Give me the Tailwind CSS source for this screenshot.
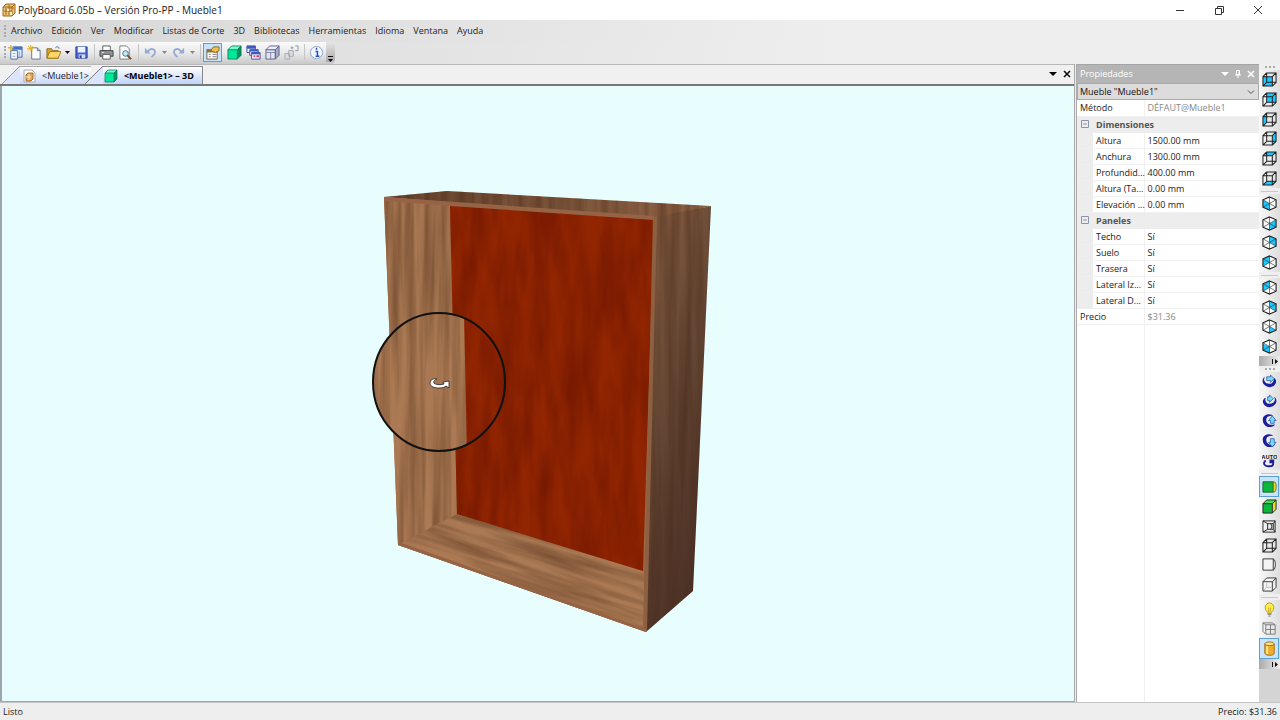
<!DOCTYPE html>
<html lang="es">
<head>
    <meta charset="UTF-8">
    <meta name="viewport" content="width=device-width, initial-scale=1.0">
    <title>PolyBoard 6.05b – Versión Pro-PP - Mueble1</title>
    <script src="https://cdn.jsdelivr.net/npm/@tailwindcss/browser@4"></script>
</head>
<body class="h-screen flex flex-col overflow-hidden bg-[#eeeeee] font-['Open_Sans','Noto_Sans',sans-serif] text-[9px] leading-4 text-[#222]">
    <!-- Title bar -->
    <header class="h-5 shrink-0 flex items-center bg-white pl-0.5 pr-[3px]">
        <svg class="size-3.5" viewBox="0 0 14 14"><path d="M1 4 4 1h9v9l-3 3H1z" fill="#f0c37a" stroke="#9a6418"/><path d="M1 4h9v9M10 4l3-3M4 5v7M7 2v10M2 8h8M7 5h5" fill="none" stroke="#a56d20"/><path d="M5 6h2v2H5zM8 9h2v3H8z" fill="#fff0c4"/></svg>
        <h1 class="ml-0.5 text-[10px]">PolyBoard 6.05b – Versión Pro-PP - Mueble1</h1>
        <div class="ml-auto flex">
            <button aria-label="Minimizar" class="w-[39px] h-5 flex items-center justify-center"><svg class="size-3" viewBox="0 0 12 12"><path d="M2 6.500h8" stroke="#333"/></svg></button>
            <button aria-label="Restaurar" class="w-[39px] h-5 flex items-center justify-center"><svg class="size-3" viewBox="0 0 12 12" fill="none" stroke="#333"><path d="M2.500 4.500h6v6h-6zM4.500 4.500v-2h6v6h-2"/></svg></button>
            <button aria-label="Cerrar" class="w-[39px] h-5 flex items-center justify-center"><svg class="size-3" viewBox="0 0 12 12"><path d="m2 2 8 8m0-8-8 8" stroke="#333"/></svg></button>
        </div>
    </header>

    <!-- Menu and toolbar -->
    <nav class="h-[22px] shrink-0 flex items-center gap-[9px] pl-1 bg-linear-to-r from-[#d6d6d6] to-[#eeeeee] to-65%">
        <span class="h-3 -mr-1 border-l-2 border-dotted border-[#aaa]"></span>
        <button>Archivo</button>
        <button>Edición</button>
        <button>Ver</button>
        <button>Modificar</button>
        <button>Listas de Corte</button>
        <button>3D</button>
        <button>Bibliotecas</button>
        <button>Herramientas</button>
        <button>Idioma</button>
        <button>Ventana</button>
        <button>Ayuda</button>
    </nav>
    <div class="h-[22px] shrink-0 flex bg-linear-to-r from-[#d8d8d8] to-[#eeeeee] to-65%">
        <div id="toolbar" class="flex items-center pl-1 pb-0.5 rounded-r bg-linear-to-b from-[#fafafa] via-[#e9e9e9] to-[#c9c9c9]"></div>
    </div>

    <div class="flex-1 min-h-0 flex">
        <!-- Document area -->
        <main class="flex-1 min-w-0 flex flex-col border-r border-[#a9a9a9]">
            <div class="h-[22px] shrink-0 flex items-end border-t border-[#b8b8b8] border-b-2 border-b-[#777] bg-[#f0f0f0]">
                <button class="h-[18px] flex items-center pl-0.5">
                    <svg class="w-[18px] h-[18px]" viewBox="0 0 18 18"><path d="M0 18 18 0v18z" fill="#dce5fa"/><path d="M0 18 18 0" stroke="#999"/></svg>
                    <span class="h-[18px] flex items-center gap-1.5 border-t border-[#aaa] bg-linear-to-b from-white to-[#cad8f8] pl-0.5 pr-0.5">
                        <svg class="size-3.5" viewBox="0 0 14 14"><path d="M2 1h8l3 3v9H2z" fill="#fff" stroke="#aaa"/><path d="m4 6 2-2h5v6l-2 2H4z" fill="#e2a254" stroke="#a86f2b"/><path d="M4 8h5M7 5v6" stroke="#fff0c8"/></svg>
                        &lt;Mueble1&gt;
                    </span>
                </button>
                <button class="h-[18px] -ml-1.5 flex items-center font-bold text-black">
                    <svg class="w-[18px] h-[18px]" viewBox="0 0 18 18"><path d="M0 18 18 0v18z" fill="#d9e4fd"/><path d="M0 18 18 0" stroke="#777"/></svg>
                    <span class="h-[18px] flex items-center gap-1.5 border-t border-r border-[#888] bg-linear-to-b from-white to-[#bfd2fb] pl-px pr-2">
                        <svg class="size-3.5" viewBox="0 0 14 14"><path d="M1 4h9v9H1z" fill="#00e89a"/><path d="m1 4 3-3h9l-3 3z" fill="#6dffd0"/><path d="m10 4 3-3v9l-3 3z" fill="#009a68"/><path d="M1 4h9v9H1zl3-3h9l-3 3m3-3v9l-3 3" fill="none" stroke="#08704e" stroke-width=".7"/></svg>
                        &lt;Mueble1&gt; – 3D
                    </span>
                </button>
                <div class="ml-auto h-5 flex items-center gap-1 pr-0.5">
                    <button aria-label="Lista de ventanas"><svg class="w-2.5 h-2" viewBox="0 0 10 8"><path d="M1 2h8L5 6z"/></svg></button>
                    <button aria-label="Cerrar vista"><svg class="size-2.5" viewBox="0 0 10 10"><path d="m2 2 6 6m0-6-6 6" stroke="#111" stroke-width="1.6"/></svg></button>
                </div>
            </div>
            <div class="flex-1 min-h-0 border-l-2 border-b border-[#9da6ac] bg-[#e7fdfe]">
                <svg class="w-full h-full" viewBox="2 86 1072 615" role="img" aria-label="Mueble1" color-interpolation-filters="sRGB">
                    <defs>
                        <filter id="grainV" x="0" y="0" width="1" height="1">
                            <feTurbulence type="fractalNoise" baseFrequency=".12 .006" numOctaves="3" seed="4"/>
                            <feColorMatrix values="0 0 0 0 .25  0 0 0 0 .13  0 0 0 0 .06  .8 0 0 0 -.25" result="g"/>
                            <feComposite in="g" in2="SourceGraphic" operator="in" result="c"/>
                            <feMerge><feMergeNode in="SourceGraphic"/><feMergeNode in="c"/></feMerge>
                        </filter>
                        <filter id="grainH" x="0" y="0" width="1" height="1">
                            <feTurbulence type="fractalNoise" baseFrequency=".01 .13" numOctaves="3" seed="8"/>
                            <feColorMatrix values="0 0 0 0 .25  0 0 0 0 .13  0 0 0 0 .06  .8 0 0 0 -.25" result="g"/>
                            <feComposite in="g" in2="SourceGraphic" operator="in" result="c"/>
                            <feMerge><feMergeNode in="SourceGraphic"/><feMergeNode in="c"/></feMerge>
                        </filter>
                        <filter id="grainR" x="0" y="0" width="1" height="1">
                            <feTurbulence type="fractalNoise" baseFrequency=".06 .012" numOctaves="3" seed="11"/>
                            <feColorMatrix values="0 0 0 0 .3  0 0 0 0 .03  0 0 0 0 0  .7 0 0 0 -.2" result="g"/>
                            <feComposite in="g" in2="SourceGraphic" operator="in" result="c"/>
                            <feMerge><feMergeNode in="SourceGraphic"/><feMergeNode in="c"/></feMerge>
                        </filter>
                        <linearGradient id="side" x2=".4" y2="1"><stop stop-color="#8d6146"/><stop offset=".4" stop-color="#6b4c37"/><stop offset="1" stop-color="#4d3228"/></linearGradient>
                        <linearGradient id="top"><stop stop-color="#694530"/><stop offset="1" stop-color="#8f6446"/></linearGradient>
                        <clipPath id="floor"><path d="m398 545 59-31 186 57 3 61z"/></clipPath>
                        <clipPath id="lens"><ellipse cx="439" cy="382" rx="66" ry="69"/></clipPath>
                    </defs>
                    <path d="m384 197 270 19-8 416-248-87z" fill="#9b6b48"/>
                    <path d="m384 197 63-6 264 15-57 13z" fill="url(#top)" filter="url(#grainV)"/>
                    <path d="m384 198 66 7 7 309-59 31z" fill="#ab7a54" filter="url(#grainV)"/>
                    <g clip-path="url(#floor)">
                        <path transform="rotate(18 398 545)" d="M380 450h310v130H380z" fill="#ab7a54" filter="url(#grainH)"/>
                    </g>
                    <path d="m450 205 204 14-11 352-186-57z" fill="#932602" filter="url(#grainR)"/>
                    <path d="m384 197 270 19v4l-204-14-66-5z" fill="#966445"/>
                    <path d="m655 217 56-11-18 385-47 41z" fill="url(#side)" filter="url(#grainV)"/>
                    <path d="M653 217h4l-10 414h-4z" fill="#8e6042"/>
                    <path d="m398 545 248 87v-3l-247-87z" fill="#966445"/>
                    <!-- Magnifier around the pointer -->
                    <g clip-path="url(#lens)">
                        <path d="M370 310h140v145H370z" fill="#ab7a54" filter="url(#grainV)"/>
                        <path d="M464 310h46v145h-43z" fill="#932602" filter="url(#grainR)"/>
                    </g>
                    <ellipse cx="439" cy="382" rx="66" ry="69" fill="none" stroke="#111" stroke-width="2"/>
                    <path d="M437 379c-4-1-7 1-7 4 0 4 5 5 9 5s6-1 7-2l3 2v-7l-6 1 1 2c-4 1-8 1-10-1-1-1 0-3 3-4z" fill="#fff" stroke="#222" stroke-width=".8"/>
                </svg>
            </div>
        </main>

        <!-- Properties -->
        <aside class="w-[183px] shrink-0 flex flex-col ml-px border-l border-[#aaa] bg-white">
            <div class="h-[19px] shrink-0 flex items-center bg-[#b5b5b5] border-t border-[#a5a5a5] pl-[3px] text-white">
                <h2>Propiedades</h2>
                <div class="ml-auto flex items-center gap-[3px] pr-[3px]">
                    <button aria-label="Opciones del panel"><svg class="size-2.5" viewBox="0 0 10 10"><path d="M1 3h8L5 7z" fill="#fff"/></svg></button>
                    <button aria-label="Fijar panel"><svg class="size-2.5" viewBox="0 0 10 10" fill="none" stroke="#fff"><path d="M3.500 1.500h3v4h-3zM2 6h6M5 6v3M6.200 1.500v4"/></svg></button>
                    <button aria-label="Cerrar panel"><svg class="size-2.5" viewBox="0 0 10 10"><path d="m2 2 6 6m0-6-6 6" stroke="#fff" stroke-width="1.6"/></svg></button>
                </div>
            </div>
            <div class="relative h-[17px] shrink-0">
                <select aria-label="Elemento" class="w-full h-full appearance-none border border-[#aaa] bg-[#dcdcdc] pl-0.5 text-[#111]">
                    <option>Mueble "Mueble1"</option>
                </select>
                <svg class="absolute right-1 top-[5px] size-2 pointer-events-none" viewBox="0 0 8 8"><path d="m1 2.500 3 3 3-3" fill="none" stroke="#555"/></svg>
            </div>
            <table class="w-full table-fixed border-collapse">
                <colgroup><col class="w-4"><col class="w-[51px]"><col></colgroup>
                <tbody id="props"></tbody>
            </table>
            <div class="flex-1 ml-[67px] border-l border-[#f0f0f0]"></div>
        </aside>

        <!-- View tools -->
        <div id="viewbar" class="w-[21px] shrink-0 flex flex-col bg-[#d4d4d4]"></div>
    </div>

    <footer class="h-[18px] shrink-0 flex items-center justify-between bg-[#eeeeee] border-t border-[#c5c5c5] pl-[3px] pr-[3px]">
        <span>Listo</span>
        <span>Precio: $31.36</span>
    </footer>

    <script>
        const svg = (body) => `<svg class="size-[15px] shrink-0" viewBox="0 0 16 16" fill="none">${body}</svg>`;

        const tools = [
            ['Proyecto nuevo', '<path d="M5 2h10v11H5z" fill="#dceafc" stroke="#3d62b0"/><path d="M5 2h10v3H5z" fill="#3e6fd0"/><path d="M3 6h7v9H3z" fill="#fff" stroke="#4569a8"/><path d="M12 7v5M5 9h3m-3 3h3" stroke="#7f9fd4"/><path d="M3 0v6M0 3h6" stroke="#e0b437" stroke-width="1.5"/>'],
            ['Nuevo', '<path d="M5 3h6l3 3v9H5z" fill="#fff" stroke="#63718d"/><path d="M11 3v3h3" stroke="#63718d"/><path d="M4 0v7M0 4h7M1 1l5 5M6 1 1 6" stroke="#e5b42d"/>'],
            ['Abrir', '<path d="M1 4h5l1 2h6v8H1z" fill="#d9a431" stroke="#8d651b"/><path d="m1 14 3-7h12l-3 7z" fill="#ffd765" stroke="#9d7420"/><path d="M10 3c2-2 4-1 4 1" stroke="#376da5"/>', 'menu'],
            ['Guardar', '<path d="M2 2h12v12H2z" fill="#4a63cf" stroke="#2d3f94"/><path d="M4 2h8v6H4z" fill="#edf4ff"/><path d="M5 10h7v4H5z" fill="#d3daf0"/><path d="M6 11h2v3H6z" fill="#283d91"/>'],
            'sep',
            ['Imprimir', '<path d="M4 1h8v5H4z" fill="#fff" stroke="#555"/><path d="M1 6h14v6H1z" fill="#8e939b" stroke="#444"/><path d="M4 10h8v5H4z" fill="#fff" stroke="#555"/><path d="M3 8h2" stroke="#dff"/>'],
            ['Vista previa', '<path d="M2 1h7l3 3v11H2z" fill="#fff" stroke="#777"/><circle cx="8" cy="9" r="3" fill="#c5e9fa" stroke="#446a85"/><path d="m10 11 4 4" stroke="#7c4f29" stroke-width="2"/>'],
            'sep',
            ['Deshacer', '<path d="M2 3v6h6z" fill="#94abd4"/><path d="M5 7c4-5 10-2 7 3l-3 3" stroke="#94abd4" stroke-width="2"/>', 'menuoff'],
            ['Rehacer', '<path d="M14 3v6H8z" fill="#94abd4"/><path d="M11 7C7 2 1 5 4 10l3 3" stroke="#94abd4" stroke-width="2"/>', 'menuoff'],
            'sep',
            ['Propiedades', '<path d="M2 5h11v10H2z" fill="#fff" stroke="#725f3c"/><path d="M2 5h11v3H2z" fill="#8a7047"/><path d="M4 10h2m2 0h4M4 12.500h2m2 0h4" stroke="#777"/><path d="m6 6 3-4h6v4l-4 2z" fill="#f2c04a" stroke="#8c661e"/>', 'on'],
            'gap',
            ['Vista 3D', '<path d="M1 5h10v10H1z" fill="#00e89a"/><path d="m1 5 4-4h10l-4 4z" fill="#70ffd1"/><path d="m11 5 4-4v10l-4 4z" fill="#008f62"/><path d="M1 5h10v10H1zl4-4h10l-4 4m4-4v10l-4 4" stroke="#086c4c" stroke-width=".8"/>'],
            ['Ventanas', '<path d="M1 1h9v7H1z" fill="#fff" stroke="#36499f"/><path d="M1 1h9v3H1z" fill="#4058bd"/><path d="M4 5h9v6H4z" fill="#fff" stroke="#36499f"/><path d="M4 5h9v2H4z" fill="#4058bd"/><path d="M6 8h9v7H6z" fill="#fff" stroke="#36499f"/><path d="M6 8h9v2H6z" fill="#4058bd"/><path d="M8 12h2m1 0h3" stroke="#d13e69" stroke-width="2"/>'],
            ['Mueble', '<path d="M1 5h10v10H1z" fill="#e3e4f2" stroke="#606387"/><path d="m1 5 4-4h10l-4 4z" fill="#eef" stroke="#606387"/><path d="m11 5 4-4v10l-4 4z" fill="#a3a8c6" stroke="#606387"/><path d="M1 8h10M6 8v7" stroke="#8083a5"/>'],
            ['Conjunto', '<path d="M1 9h5v6H1zM5 6h5v6H5z" fill="#ddd" stroke="#a8a8b2"/><path d="M7 3h3M8.500 1.500v3M12 1h3v5h-3" stroke="#8794b5"/>'],
            'sep',
            ['Acerca de', '<circle cx="8" cy="8" r="6.500" fill="#f2f6ff" stroke="#8ba1cc"/><path d="M7 7h2v5m-2 0h4M8 3v2" stroke="#2851b4" stroke-width="1.6"/>'],
        ];

        document.getElementById('toolbar').innerHTML = `<span class="h-3 border-l-2 border-dotted border-[#aaa]"></span>` + tools.map(tool => {
            if (tool === 'sep') return `<span class="w-[6px] h-4 flex justify-center"><span class="w-px bg-[#c5c5c5]"></span></span>`;
            if (tool === 'gap') return `<span class="w-[3px]"></span>`;
            const [label, body, kind] = tool;
            const on = kind === 'on' ? 'bg-[#c9e3fa] border border-[#5b9fd8]' : '';
            const arrow = kind === 'menu' || kind === 'menuoff'
                ? `<button aria-label="${label}: más" class="w-[9px] flex justify-center"><svg class="w-[5px] h-[3px]" viewBox="0 0 5 3"><path d="M0 0h5L2.500 3z" fill="${kind === 'menu' ? '#111' : '#888'}"/></svg></button>` : '';
            return `<button aria-label="${label}" class="w-[19px] h-[19px] flex items-center justify-center ${on}">${svg(body)}</button>${arrow}`;
        }).join('') + `<button aria-label="Más botones" class="w-[9px] h-full flex items-end justify-center rounded-r bg-linear-to-b from-[#e5e5e5] to-[#aaa]"><svg class="w-[5px] h-[6px]" viewBox="0 0 5 6"><path d="M0 0h5v1H0zM0 3h5L2.500 6z" fill="#111"/></svg></button>`;

        // [label, value] rows; a lone label starts a section
        const props = [
            ['Método', 'DÉFAUT@Mueble1', 'root'],
            ['Dimensiones'],
            ['Altura', '1500.00 mm'],
            ['Anchura', '1300.00 mm'],
            ['Profundid...', '400.00 mm'],
            ['Altura (Ta...', '0.00 mm'],
            ['Elevación ...', '0.00 mm'],
            ['Paneles'],
            ['Techo', 'Sí'],
            ['Suelo', 'Sí'],
            ['Trasera', 'Sí'],
            ['Lateral Iz...', 'Sí'],
            ['Lateral D...', 'Sí'],
            ['Precio', '$31.36', 'root'],
        ];

        document.getElementById('props').innerHTML = props.map(([label, value, root]) => {
            if (root) return `<tr class="h-4 border-b border-[#f0f0f0]"><th colspan="2" class="p-0 pl-[3px] text-left font-normal leading-[15px]">${label}</th><td class="p-0 pl-[3px] border-l border-[#f0f0f0] text-[#888] leading-[15px]">${value}</td></tr>`;
            if (!value) return `<tr class="h-4 bg-[#ededed] border-b border-[#ededed]"><td class="p-0"><button aria-label="Contraer ${label}" class="block mx-auto"><svg class="size-2" viewBox="0 0 8 8" fill="none" stroke="#8a94a8"><path d="M.5.500h7v7h-7zM2 4h4"/></svg></button></td><th colspan="2" class="p-0 pl-[3px] text-left font-bold text-[#555] leading-[15px]">${label}</th></tr>`;
            return `<tr class="h-4 border-b border-[#f0f0f0]"><td class="p-0 bg-[#ededed]"></td><th class="p-0 pl-[3px] text-left font-normal whitespace-nowrap leading-[15px]">${label}</th><td class="p-0 pl-[3px] border-l border-[#f0f0f0] leading-[15px]">${value}</td></tr>`;
        }).join('');

        const wire = '<path d="M1 5h10v10H1zM5 1h10v10H5zM1 5l4-4m6 4 4-4M1 15l4-4m6 4 4-4" stroke="#222" stroke-width="1.1"/>';
        const box = (face) => `<path d="${face}" fill="#1cc8ff"/>${wire}`;
        const iso = (face) => `<path d="M8 1 15 4v8l-7 3-7-3V4z" fill="#fff"/><path d="${face}" fill="#1cc8ff"/><path d="M1 4l7 4 7-4M8 8v7M8 1v7M1 12l7-4 7 4" stroke="#333" stroke-width=".7"/><path d="M8 1 15 4v8l-7 3-7-3V4z" stroke="#222" stroke-width="1.2"/>`;
        const turn = (arc, head) => `<path d="${arc}" fill="#1b1f9c"/><path d="${head}" fill="#6fdcf8" stroke="#2b4fae" stroke-width=".8"/>`;

        const groups = [
            { size: 'h-[118px]', items: [
                ['Frente', box('M1 5h10v10H1z')],
                ['Trasera', box('M5 1h10v10H5z')],
                ['Izquierda', box('M1 5l4-4v10l-4 4z')],
                ['Derecha', box('M11 5l4-4v10l-4 4z')],
                ['Arriba', box('M1 5l4-4h10l-4 4z')],
                ['Abajo', box('M1 15l4-4h10l-4 4z')],
            ] },
            { size: 'h-[78px]', items: [
                ['Esquina 1', iso('M1 4l7 4v7l-7-3z')],
                ['Esquina 2', iso('M15 4 8 8v7l7-3z')],
                ['Esquina 3', iso('M8 1l7 3v8L8 8z')],
                ['Esquina 4', iso('M8 1 1 4v8l7-4z')],
            ] },
            { size: 'h-[78px]', items: [
                ['Esquina baja 1', iso('M8 1 1 4v8l7-4z')],
                ['Esquina baja 2', iso('M8 1l7 3v8L8 8z')],
                ['Esquina baja 3', iso('M15 12l-7 3V8z')],
                ['Esquina baja 4', iso('M1 5v7l7 3V8z')],
            ] },
            'more',
            { size: 'h-[98px]', items: [
                ['Girar a la izquierda', turn('M3 3C0 5 0 9 2 11c3 4 10 4 12 0 2-3 1-6-2-7 1 3 0 5-2 6-3 1-6 0-7-2-1-1-1-3 0-5z', 'M5 3h4V1l4 4-4 4V7H5z')],
                ['Girar a la derecha', turn('M13 3c3 2 3 6 1 8-3 4-10 4-12 0C0 8 1 5 4 4c-1 3 0 5 2 6 3 1 6 0 7-2 1-1 1-3 0-5z', 'M12 5 8 1v2H6v4h2v2z')],
                ['Girar arriba', turn('M12 3C8 0 3 1 1 5c-1 5 2 10 7 10 3 0 5-1 6-3-3 1-6 1-8-1s-2-5 0-7c2-1 4-1 6-1z', 'm11 3 4 5h-2v3H9V8H7z')],
                ['Girar abajo', turn('M12 3C8 0 3 1 1 5c-1 5 2 10 7 10 3 0 5-1 6-3-3 1-6 1-8-1s-2-5 0-7c2-1 4-1 6-1z', 'M9 6h4v4h2l-4 5-4-5h2z')],
                ['Giro automático', '<text x="8" y="6" text-anchor="middle" font-size="6" font-weight="700" fill="#222">AUTO</text><path d="M4 8c-4 3-1 7 5 6 3 0 3-3 3-4H8m5-2H8" stroke="#1b1f9c" stroke-width="2"/>'],
            ] },
            { size: 'h-[118px]', items: [
                ['Sólido', '<path d="M1 3h11v11H1z" fill="#0cb83c" stroke="#15612a"/><path d="M12 3c3 0 3 2 3 5s0 6-3 6z" fill="#eed82e" stroke="#776b16"/>', 'on'],
                ['Sólido en perspectiva', '<path d="M1 5h10v10H1z" fill="#0cb83c"/><path d="m1 5 4-4h10l-4 4z" fill="#47dd4d"/><path d="m11 5 4-4v10l-4 4z" fill="#eed82e"/><path d="M1 5h10v10H1zl4-4h10l-4 4m4-4v10l-4 4" stroke="#222"/>'],
                ['Alambre', '<path d="M1 2h13v12H1zM1 2l5 3v6l-5 3M6 5h6v6H6m6-6 2-3m-2 9 2 3M9 5c2 1 2 5 0 6" stroke="#222"/>'],
                ['Alambre en perspectiva', wire],
                ['Líneas ocultas', '<path d="M1 2h11v12H1zM12 2c3 1 3 11 0 12" stroke="#333" fill="#f4f4f4"/>'],
                ['Líneas ocultas en perspectiva', '<path d="M1 5h10v10H1zl4-4h10l-4 4m4-4v10l-4 4" stroke="#333" fill="#f4f4f4"/><path d="M5 6v5h5M5 11l-3 3" stroke="#bbb"/>'],
            ] },
            { size: 'h-[59px]', items: [
                ['Luz', '<path d="M6 11C1 7 4 1 8 1s7 6 2 10v1H6z" fill="#ffed48" stroke="#b29b21"/><path d="M6 13h4m-3 2h2" stroke="#666"/><path d="M7 11V6m2 5V6" stroke="#c9a92a"/>'],
                ['Caras', '<path d="M4 4h10v10H4zM4 4 1 2v9l3 3M1 2h10l3 2M9 4v10M4 9h10" stroke="#777"/>'],
                ['Materiales', '<path d="M3 3v10c0 3 10 3 10 0V3z" fill="#edae2b" stroke="#a66b0d"/><path d="M5.500 5v9" stroke="#ffe48c" stroke-width="2"/><ellipse cx="8" cy="3" rx="5" ry="2" fill="#ffe28a" stroke="#a66b0d"/>', 'on'],
            ] },
        ];

        const dots = `<div class="h-[6px] shrink-0 flex items-center justify-center bg-[#efefef]"><span class="w-[10px] border-t-2 border-dotted border-[#aaa]"></span></div>`;
        const more = `<button aria-label="Más botones" class="h-[10px] shrink-0 flex items-center justify-end pr-0.5 bg-linear-to-r from-[#aaa] to-[#eee]"><svg class="w-[6px] h-[5px]" viewBox="0 0 6 5"><path d="M0 0h1v5H0zM3 0v5l3-2.500z" fill="#111"/></svg></button>`;

        document.getElementById('viewbar').innerHTML = dots + groups.map((group, i) => {
            if (group === 'more') return more + dots;
            const line = i > 0 && groups[i - 1] !== 'more' ? `<div class="h-[6px] shrink-0 flex items-center bg-[#efefef] px-0.5"><span class="w-full h-px bg-[#c8c8c8]"></span></div>` : '';
            return line + `<div class="${group.size} shrink-0 flex flex-col pr-px bg-linear-to-r from-[#f8f8f8] to-[#dedede]">` + group.items.map(([label, body, on]) =>
                `<button aria-label="${label}" class="flex-1 w-full flex items-center justify-center ${on ? 'bg-[#c9e3fa] border border-[#5b9fd8]' : ''}">${svg(body)}</button>`
            ).join('') + `</div>`;
        }).join('') + more;
    </script>
</body>
</html>
